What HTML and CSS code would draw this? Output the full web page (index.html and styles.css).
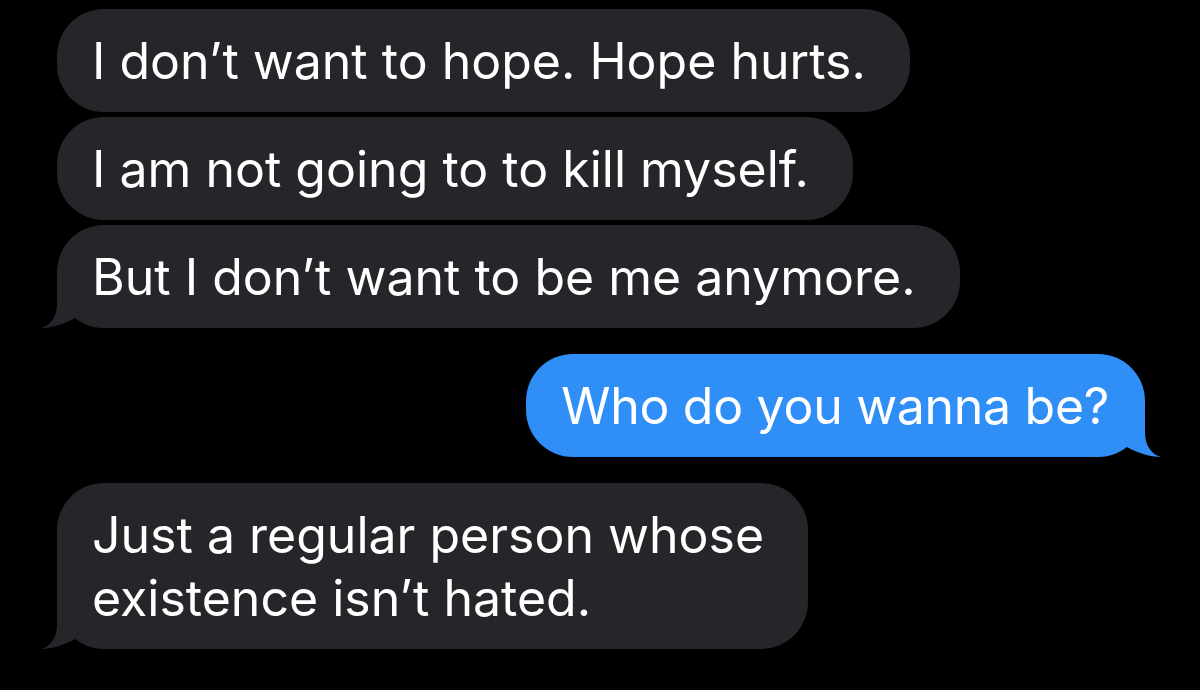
FILE: index.html
```html
<!DOCTYPE html>
<html lang="en">
<head>
  <meta charset="UTF-8">
  <title>Messages</title>
  <link rel="stylesheet" href="styles.css">
</head>
<body>
  <div class="thread">
    <div class="row in">
      <div class="bubble">I don’t want to hope. Hope hurts.</div>
    </div>
    <div class="row in">
      <div class="bubble">I am not going to to kill myself.</div>
    </div>
    <div class="row in">
      <div class="bubble tail">But I don’t want to be me anymore.
        <svg class="tail-shape" viewBox="0 0 70 50" width="70" height="50"><path d="M20,4 L20,26 C20,40 12,48 4,50 C14,50 28,46 38,40 L50,20 L20,4 Z"/></svg>
      </div>
    </div>

    <div class="row out">
      <div class="bubble blue tail">Who do you wanna be?
        <svg class="tail-shape" viewBox="0 0 70 50" width="70" height="50"><path d="M20,4 L20,26 C20,40 12,48 4,50 C14,50 28,46 38,40 L50,20 L20,4 Z"/></svg>
      </div>
    </div>

    <div class="row in">
      <div class="bubble tail">Just a regular person whose<br>existence isn’t hated.
        <svg class="tail-shape" viewBox="0 0 70 50" width="70" height="50"><path d="M20,4 L20,26 C20,40 12,48 4,50 C14,50 28,46 38,40 L50,20 L20,4 Z"/></svg>
      </div>
    </div>
  </div>
</body>
</html>
```

FILE: styles.css
```css
body {
  margin: 0;
  background: #000;
  font-family: Inter, "Noto Sans", sans-serif;
}
.thread {
  padding: 9px 55px 0 57px;
  display: flex;
  flex-direction: column;
}
.row {
  display: flex;
  margin-bottom: 5px;
}
.row.in {
  justify-content: flex-start;
}
.row.out {
  justify-content: flex-end;
  margin-top: 21px;
  margin-bottom: 26px;
}
.bubble {
  position: relative;
  background: #262529;
  color: #fff;
  font-size: 50px;
  line-height: 63px;
  letter-spacing: 0;
  padding: 21px 44px 19px 35px;
  border-radius: 47px;
  white-space: nowrap;
}
.bubble.blue {
  background: #2f8ff7;
  letter-spacing: -0.3px;
  padding-right: 36px;
}
.tail-shape {
  position: absolute;
  bottom: 0;
  left: -20px;
  fill: #262529;
}
.blue .tail-shape {
  left: auto;
  right: -20px;
  transform: scaleX(-1);
  fill: #2f8ff7;
}
```
